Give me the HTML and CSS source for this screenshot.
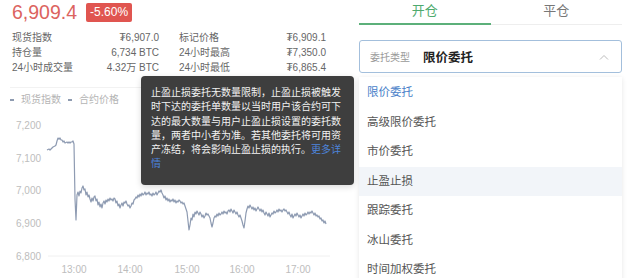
FILE: index.html
```html
<!DOCTYPE html>
<html lang="zh">
<head>
    <meta charset="UTF-8">
    <meta name="viewport" content="width=device-width, initial-scale=1.0">
    <title>合约交易</title>
    <link rel="stylesheet" href="styles.css">
</head>
<body>

<div class="page">
    <!-- Market info + chart -->
    <div class="market">
        <div class="price-row">
            <span class="price">6,909.4</span>
            <span class="change">-5.60%</span>
        </div>

        <div class="stats">
            <div class="stat"><span>现货指数</span><span>₮6,907.0</span></div>
            <div class="stat"><span>标记价格</span><span>₮6,909.1</span></div>
            <div class="stat"><span>持仓量</span><span>6,734 BTC</span></div>
            <div class="stat"><span>24小时最高</span><span>₮7,350.0</span></div>
            <div class="stat"><span>24小时成交量</span><span>4.32万 BTC</span></div>
            <div class="stat"><span>24小时最低</span><span>₮6,865.4</span></div>
        </div>

        <div class="chart">
            <div class="legend">
                <span class="legend-item"><i class="dash"></i>现货指数</span>
                <span class="legend-item"><i class="dash"></i>合约价格</span>
            </div>
            <svg class="plot" width="340" height="165" viewBox="0 113 340 165">
                <g class="axis">
                    <text x="16" y="129.5">7,200</text>
                    <text x="16" y="162.5">7,100</text>
                    <text x="16" y="195">7,000</text>
                    <text x="16" y="228">6,900</text>
                    <text x="16" y="260.5">6,800</text>
                </g>
                <line class="grid" x1="48" y1="257" x2="330" y2="257"/>
                <g class="axis times">
                    <text x="74" y="273.5">13:00</text>
                    <text x="130" y="273.5">14:00</text>
                    <text x="187" y="273.5">15:00</text>
                    <text x="242" y="273.5">16:00</text>
                    <text x="298" y="273.5">17:00</text>
                </g>
                <polyline class="line" points="47,151 49,150 50,151 52,149 53,148 55,147 56,146 57,142 58,139 59,140 60,139 61,141 62,141 63,143 64,142 65,144 67,143 68,144 69,143 70,144 71,143 72,143 73,142 74,145 75,200 76,221 77,196 78,193 79,197 80,192 81,194 82,189 83,187 84,191 85,190 86,196 87,193 88,198 89,196 90,200 91,203 92,199 93,202 94,198 95,197 96,202 97,200 98,206 99,203 100,208 101,205 102,209 103,204 104,202 105,205 106,201 107,203 108,200 109,202 110,199 111,201 112,200 113,202 114,199 115,200 116,204 117,202 118,207 119,205 120,209 121,206 122,204 123,207 124,203 125,204 126,202 127,205 128,207 129,206 130,209 131,207 132,204 133,205 134,201 135,200 136,198 137,199 138,196 139,198 140,195 141,197 142,194 143,196 144,195 145,193 146,196 147,194 148,195 149,193 150,196 151,195 152,197 153,194 154,196 155,195 156,193 157,196 158,194 159,192 160,193 161,191 162,194 163,196 164,199 165,197 166,201 167,199 168,202 169,200 170,203 171,201 172,202 173,200 174,203 175,201 176,204 177,202 178,203 179,201 180,202 181,204 182,203 183,205 184,204 185,207 186,210 187,213 188,222 189,231 190,226 191,219 192,221 193,215 194,218 195,213 196,215 197,212 198,214 199,216 200,213 201,215 202,218 203,216 204,219 205,217 206,214 207,216 208,215 209,217 210,219 211,224 212,228 213,224 214,219 215,217 216,218 217,215 218,217 219,214 220,216 221,215 222,213 223,215 224,212 225,214 226,213 227,215 228,212 229,211 230,213 231,210 232,212 233,214 234,211 235,213 236,215 237,213 238,216 239,218 240,216 241,219 242,222 243,226 244,229 245,222 246,214 247,210 248,207 249,209 250,206 251,208 252,210 253,208 254,211 255,209 256,212 257,210 258,208 259,210 260,212 261,210 262,213 263,211 264,214 265,216 266,213 267,215 268,217 269,214 270,218 271,216 272,214 273,215 274,212 275,214 276,213 277,211 278,213 279,210 280,212 281,211 282,213 283,211 284,210 285,212 286,211 287,213 288,215 289,213 290,216 291,218 292,215 293,219 294,217 295,215 296,217 297,214 298,216 299,218 300,216 301,219 302,217 303,215 304,217 305,214 306,216 307,215 308,213 309,215 310,213 311,214 312,212 313,214 314,216 315,214 316,217 317,216 318,218 319,217 320,220 321,219 322,222 323,221 324,224 325,222 326,225"/>
            </svg>
        </div>

        <!-- Tooltip over the chart -->
        <div class="tooltip">
            止盈止损委托无数量限制，止盈止损被触发时下达的委托单数量以当时用户该合约可下达的最大数量与用户止盈止损设置的委托数量，两者中小者为准。若其他委托将可用资产冻结，将会影响止盈止损的执行。<a href="#" class="more">更多详情</a>
        </div>
    </div>

    <!-- Order panel -->
    <div class="trade">
        <div class="tabs">
            <div class="tab active">开仓</div>
            <div class="tab">平仓</div>
        </div>

        <div class="select">
            <span class="select-label">委托类型</span>
            <span class="select-value">限价委托</span>
            <svg class="chevron" width="10" height="6" viewBox="0 0 10 6">
                <polyline points="1,5.5 5,1.5 9,5.5"/>
            </svg>
        </div>

        <ul class="options">
            <li class="option selected">限价委托</li>
            <li class="option">高级限价委托</li>
            <li class="option">市价委托</li>
            <li class="option hover">止盈止损</li>
            <li class="option">跟踪委托</li>
            <li class="option">冰山委托</li>
            <li class="option">时间加权委托</li>
        </ul>
    </div>
</div>

</body>
</html>
```

FILE: styles.css
```css
body {
    margin: 0;
    background-color: #fff;
    font-family: "Liberation Sans", "Noto Sans CJK SC", sans-serif;
    color: #666;
}
.page {
    display: flex;
    height: 278px;
    overflow: hidden;
}
.market {
    position: relative;
    width: 340px;
    flex-shrink: 0;
}
.price-row {
    display: flex;
    align-items: center;
    height: 24px;
    padding-left: 12px;
    gap: 9px;
}
.price {
    font-size: 19.5px;
    color: #dc6360;
}
.change {
    height: 19px;
    line-height: 19px;
    padding: 0 4px;
    font-size: 12px;
    color: #fff;
    background-color: #e05550;
    border-radius: 2px;
}
.stats {
    display: grid;
    grid-template-columns: 147px 147px;
    column-gap: 20px;
    margin: 6px 0 0 12px;
    font-size: 10px;
    line-height: 15px;
}
.stat {
    display: flex;
    justify-content: space-between;
}
.chart {
    margin: 12px 10px 0 10px;
    border-top: 1px solid #f2f2f2;
}
.legend {
    display: flex;
    gap: 7px;
    height: 24px;
    line-height: 24px;
    font-size: 10px;
    color: #b4b4b4;
}
.legend-item {
    display: flex;
    align-items: center;
}
.dash {
    display: inline-block;
    width: 4px;
    height: 1.5px;
    margin-right: 7px;
    background-color: #8e9bb0;
}
.plot {
    display: block;
    margin-left: -10px;
}
.axis text {
    font-size: 10px;
    fill: #bdbdbd;
}
.times text {
    text-anchor: middle;
}
.grid {
    stroke: #f0f0f0;
    stroke-width: 1;
}
.line {
    fill: none;
    stroke: #8e9bb2;
    stroke-width: 1.2;
    stroke-linejoin: round;
}
.tooltip {
    position: absolute;
    left: 141px;
    top: 76px;
    width: 193px;
    padding: 10px 10px 13px;
    font-size: 10px;
    line-height: 14.3px;
    color: #f2f2f2;
    background-color: #3e3e3e;
    border-radius: 4px;
    box-shadow: 0 2px 6px rgba(0, 0, 0, 0.15);
}
.tooltip .more {
    color: #4d84db;
    text-decoration: none;
}
.trade {
    width: 263px;
    margin-left: 19px;
    flex-shrink: 0;
}
.tabs {
    display: flex;
    height: 24px;
    border-bottom: 1px solid #eee;
}
.tab {
    flex: 1;
    text-align: center;
    font-size: 13px;
    line-height: 21px;
    color: #777;
}
.tab.active {
    color: #4eaa6e;
    border-bottom: 2px solid #5cb07a;
    margin-bottom: -1px;
}
.select {
    display: flex;
    align-items: center;
    height: 31px;
    margin-top: 15px;
    padding: 0 10px;
    border: 1px solid #a3bfdc;
    border-radius: 3px;
}
.select-label {
    font-size: 10px;
    color: #999;
    margin-right: 13px;
}
.select-value {
    font-size: 12.5px;
    font-weight: bold;
    color: #222;
}
.chevron {
    margin-left: auto;
    margin-right: 2px;
}
.chevron polyline {
    fill: none;
    stroke: #bbb;
    stroke-width: 1;
}
.options {
    list-style: none;
    margin: 4px 0 0;
    padding: 1px 0 0;
    background: #fff;
    box-shadow: 0 1px 5px rgba(0, 0, 0, 0.1);
}
.option {
    height: 29.5px;
    line-height: 29.5px;
    padding-left: 8px;
    font-size: 11.5px;
    color: #555;
}
.option.selected {
    color: #4a7fc9;
}
.option.hover {
    background-color: #f2f5f9;
}
```
